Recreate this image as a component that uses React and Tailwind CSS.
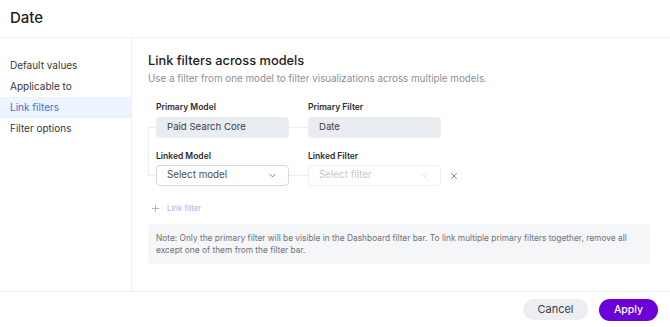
import { ChevronDown, X, Plus } from "lucide-react";

const nav = ["Default values", "Applicable to", "Link filters", "Filter options"];

export default function App() {
  return (
    <div className="w-[670px] h-[327px] bg-white flex flex-col text-[#2b2d31] font-['Inter','Noto_Sans',sans-serif]">
      <div className="h-[38px] shrink-0 flex items-center px-[10px] border-b border-[#f0f1f3]">
        <span className="text-[15px] font-medium text-[#1f2125]">Date</span>
      </div>

      <div className="flex-1 flex min-h-0">
        <div className="w-[132px] shrink-0 border-r border-[#eef0f2] pt-[17px]">
          {nav.map((n) => (
            <div
              key={n}
              className={
                "h-[21px] flex items-center pl-[10px] text-[10px] " +
                (n === "Link filters" ? "bg-[#eef4fd] text-[#3c6fd6]" : "text-[#35383d]")
              }
            >
              {n}
            </div>
          ))}
        </div>

        <div className="flex-1 pl-[16px] pr-[20px] pt-[13px] flex flex-col">
          <div className="text-[12.8px] leading-[20px] font-medium text-[#1e2024]">Link filters across models</div>
          <div className="mt-[1px] text-[9.8px] leading-[14px] text-[#8c9097]">
            Use a filter from one model to filter visualizations across multiple models.
          </div>

          <div className="relative mt-[15px] pl-[8px]">
            <div className="absolute left-0 top-[26px] w-[160px] h-[49px] border-l border-t border-b border-[#eceef1]" />
            <div className="relative flex gap-[19px]">
              <div className="w-[133px]">
                <div className="text-[8.5px] leading-[12px] font-semibold text-[#2b2d31]">Primary Model</div>
                <div className="mt-[4px] h-[21px] rounded-[4px] bg-[#e9ecf0] flex items-center px-[11px] text-[9.6px] text-[#3a3d42]">
                  Paid Search Core
                </div>
              </div>
              <div className="w-[133px]">
                <div className="text-[8.5px] leading-[12px] font-semibold text-[#2b2d31]">Primary Filter</div>
                <div className="mt-[4px] h-[21px] rounded-[4px] bg-[#e9ecf0] flex items-center px-[11px] text-[9.6px] text-[#3a3d42]">
                  Date
                </div>
              </div>
            </div>

            <div className="relative flex gap-[19px] mt-[12px] items-end">
              <div className="w-[133px]">
                <div className="text-[8.5px] leading-[12px] font-semibold text-[#2b2d31]">Linked Model</div>
                <div className="mt-[3px] h-[21px] rounded-[4px] bg-white border border-[#d5d8dd] flex items-center justify-between pl-[10px] pr-[10px] text-[9.8px] text-[#4a4d52]">
                  Select model
                  <ChevronDown size={11} strokeWidth={1.8} className="text-[#6b6f76]" />
                </div>
              </div>
              <div className="w-[133px]">
                <div className="text-[8.5px] leading-[12px] font-semibold text-[#2b2d31]">Linked Filter</div>
                <div className="mt-[3px] h-[21px] rounded-[4px] bg-white border border-[#eef0f2] flex items-center justify-between pl-[10px] pr-[10px] text-[9.8px] text-[#c4c7cc]">
                  Select filter
                  <ChevronDown size={11} strokeWidth={1.6} className="text-[#c9ccd1]" />
                </div>
              </div>
              <div className="h-[21px] flex items-center -ml-[11px]">
                <X size={10} strokeWidth={1.8} className="text-[#55585e]" />
              </div>
            </div>
          </div>

          <div className="mt-[17px] pl-[2px] flex items-center gap-[6px] text-[7.8px] text-[#c6a4ef]">
            <Plus size={11} strokeWidth={1.6} className="text-[#b78ceb]" />
            Link filter
          </div>

          <div className="mt-[9px] rounded-[4px] bg-[#f5f6f8] px-[8px] py-[8px] text-[8.35px] leading-[12px] text-[#6e7279]">
            Note: Only the primary filter will be visible in the Dashboard filter bar. To link multiple primary filters together, remove all except one of them from the filter bar.
          </div>
        </div>
      </div>

      <div className="h-[36px] shrink-0 border-t border-[#f0f1f3] flex items-center justify-end gap-[11px] pr-[12px]">
        <button className="h-[21px] w-[65px] rounded-full bg-[#eceef1] text-[11px] text-[#3a3d42]">Cancel</button>
        <button className="h-[22px] w-[59px] rounded-full bg-[#6b00d9] text-[10.5px] font-medium text-white">Apply</button>
      </div>
    </div>
  );
}
